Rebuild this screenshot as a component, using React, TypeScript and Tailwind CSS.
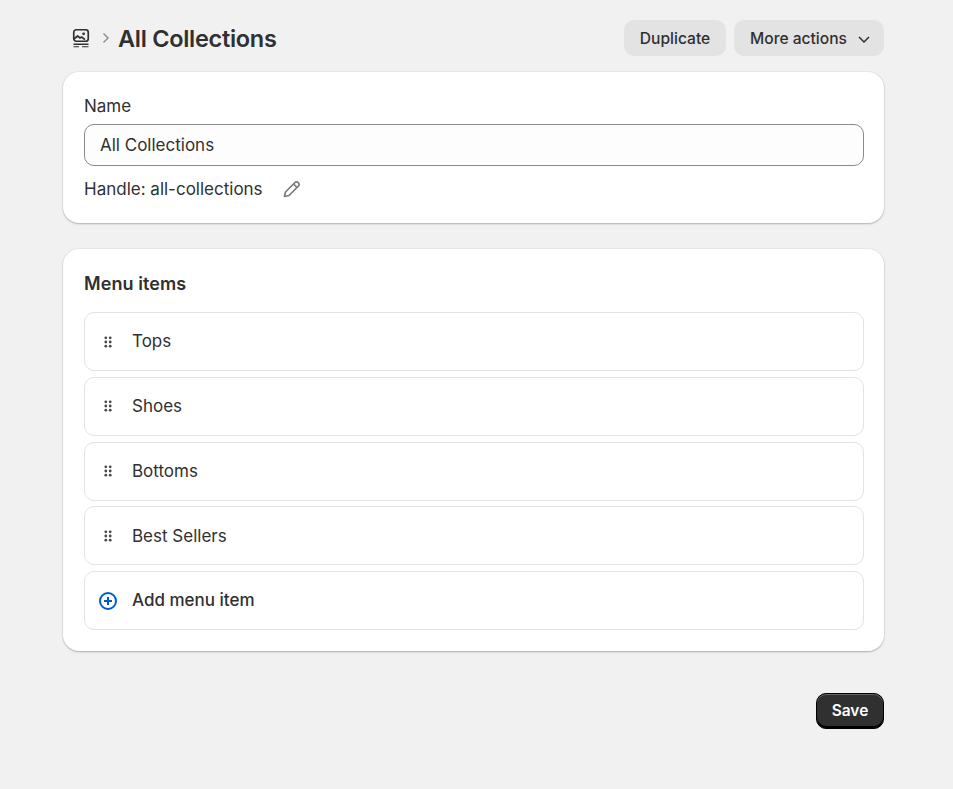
import React from 'react'

const items = ['Tops', 'Shoes', 'Bottoms', 'Best Sellers']

const DragHandle = () => (
    <svg width="10" height="14" viewBox="0 0 10 14" fill="#4a4a4a" className="shrink-0">
        <circle cx="2.8" cy="2.8" r="1.4" />
        <circle cx="7.2" cy="2.8" r="1.4" />
        <circle cx="2.8" cy="7" r="1.4" />
        <circle cx="7.2" cy="7" r="1.4" />
        <circle cx="2.8" cy="11.2" r="1.4" />
        <circle cx="7.2" cy="11.2" r="1.4" />
    </svg>
)

const MenuIcon = () => (
    <svg width="20" height="20" viewBox="0 0 20 20" fill="none" stroke="#303030" strokeWidth="1.7" className="shrink-0">
        <rect x="2.75" y="1.75" width="14.5" height="11.5" rx="2.5" />
        <path d="M3 11l3.6-3 2.4 2 1.6-1 3.4 2.6" strokeLinejoin="round" />
        <circle cx="12.6" cy="5.8" r="1.4" fill="#303030" stroke="none" />
        <path d="M2.5 16.25h15" strokeWidth="1.5" />
        <path d="M2.5 18.75h5.5M11 18.75h6.5" strokeWidth="1" />
    </svg>
)

export default function App() {
    return (
        <div className="min-h-[789px] bg-[#f1f1f1] pl-[63px] pr-[69px] pt-5 text-[#303030] font-['Inter',sans-serif]">
            <div className="flex items-center justify-between h-9">
                <div className="flex items-center">
                    <span className="ml-2"><MenuIcon /></span>
                    <svg width="12" height="16" viewBox="0 0 12 16" fill="none" stroke="#8a8a8a" strokeWidth="1.4" className="ml-[9px]">
                        <path d="M3.5 3.5l4.5 4.5-4.5 4.5" />
                    </svg>
                    <h1 className="ml-[6px] pt-px text-[23.5px] font-semibold tracking-[-0.29px]">All Collections</h1>
                </div>
                <div className="flex gap-2">
                    <button className="h-9 w-[102px] pt-px rounded-[10px] bg-[#e3e3e3] text-[15.6px] font-medium">Duplicate</button>
                    <button className="h-9 w-[150px] pt-px pl-4 rounded-[10px] bg-[#e3e3e3] text-[15.6px] font-medium flex items-center gap-[10px]">
                        More actions
                        <svg width="14" height="14" viewBox="0 0 14 14" fill="none" stroke="#303030" strokeWidth="1.5">
                            <path d="M2 5l5 5 5-5" />
                        </svg>
                    </button>
                </div>
            </div>

            <div className="mt-4 h-[151px] rounded-[16px] bg-white pl-[21px] pr-5 pt-[23px] shadow-[0_1px_2px_rgba(0,0,0,0.25),0_0_0_1px_rgba(0,0,0,0.03)]">
                <div className="text-[17px] leading-[22px]">Name</div>
                <div className="mt-[7px] h-[42px] rounded-[10px] border border-[#8a8a8a] bg-[#fdfdfd] px-[15px] pt-px flex items-center text-[17px]">All Collections</div>
                <div className="mt-3 flex items-center text-[17px] leading-[22px]">
                    Handle: all-collections
                    <svg width="20" height="20" viewBox="0 0 20 20" fill="none" stroke="#7a7a7a" strokeWidth="1.7" strokeLinejoin="round" className="ml-[19px]">
                        <path d="M2.5 17.5l1-4.5L13 3.5a2.1 2.1 0 013 0l.5.5a2.1 2.1 0 010 3L7 16.5l-4.5 1z" />
                        <path d="M11.5 5l3.5 3.5" />
                    </svg>
                </div>
            </div>

            <div className="mt-[26px] h-[402px] rounded-[16px] bg-white pl-[21px] pr-5 pt-[23px] shadow-[0_1px_2px_rgba(0,0,0,0.25),0_0_0_1px_rgba(0,0,0,0.03)]">
                <h2 className="text-[18px] leading-[24px] font-semibold tracking-[0.08px]">Menu items</h2>
                <div className="mt-4 flex flex-col gap-[5.75px]">
                    {items.map(item => (
                        <div key={item} className="h-[59px] rounded-[10px] border border-[#e3e3e3] pl-[18px] flex items-center gap-[19px] text-[17px]">
                            <DragHandle />
                            <span className="pt-px">{item}</span>
                        </div>
                    ))}
                    <div className="h-[59px] rounded-[10px] border border-[#e3e3e3] pl-[13px] flex items-center gap-[14px] text-[17px] font-[550]">
                        <svg width="20" height="20" viewBox="0 0 20 20" fill="none" stroke="#005bd3" strokeWidth="2" className="shrink-0">
                            <circle cx="10" cy="10" r="8" />
                            <path d="M10 6v8M6 10h8" />
                        </svg>
                        Add menu item
                    </div>
                </div>
            </div>

            <div className="mt-[42px] flex justify-end">
                <button className="h-9 w-[68px] rounded-[10px] bg-[#303030] border border-black text-white text-[15.5px] font-semibold shadow-[inset_0_-2px_0_#000,inset_0_1px_0_rgba(255,255,255,0.25)]">Save</button>
            </div>
        </div>
    )
}
